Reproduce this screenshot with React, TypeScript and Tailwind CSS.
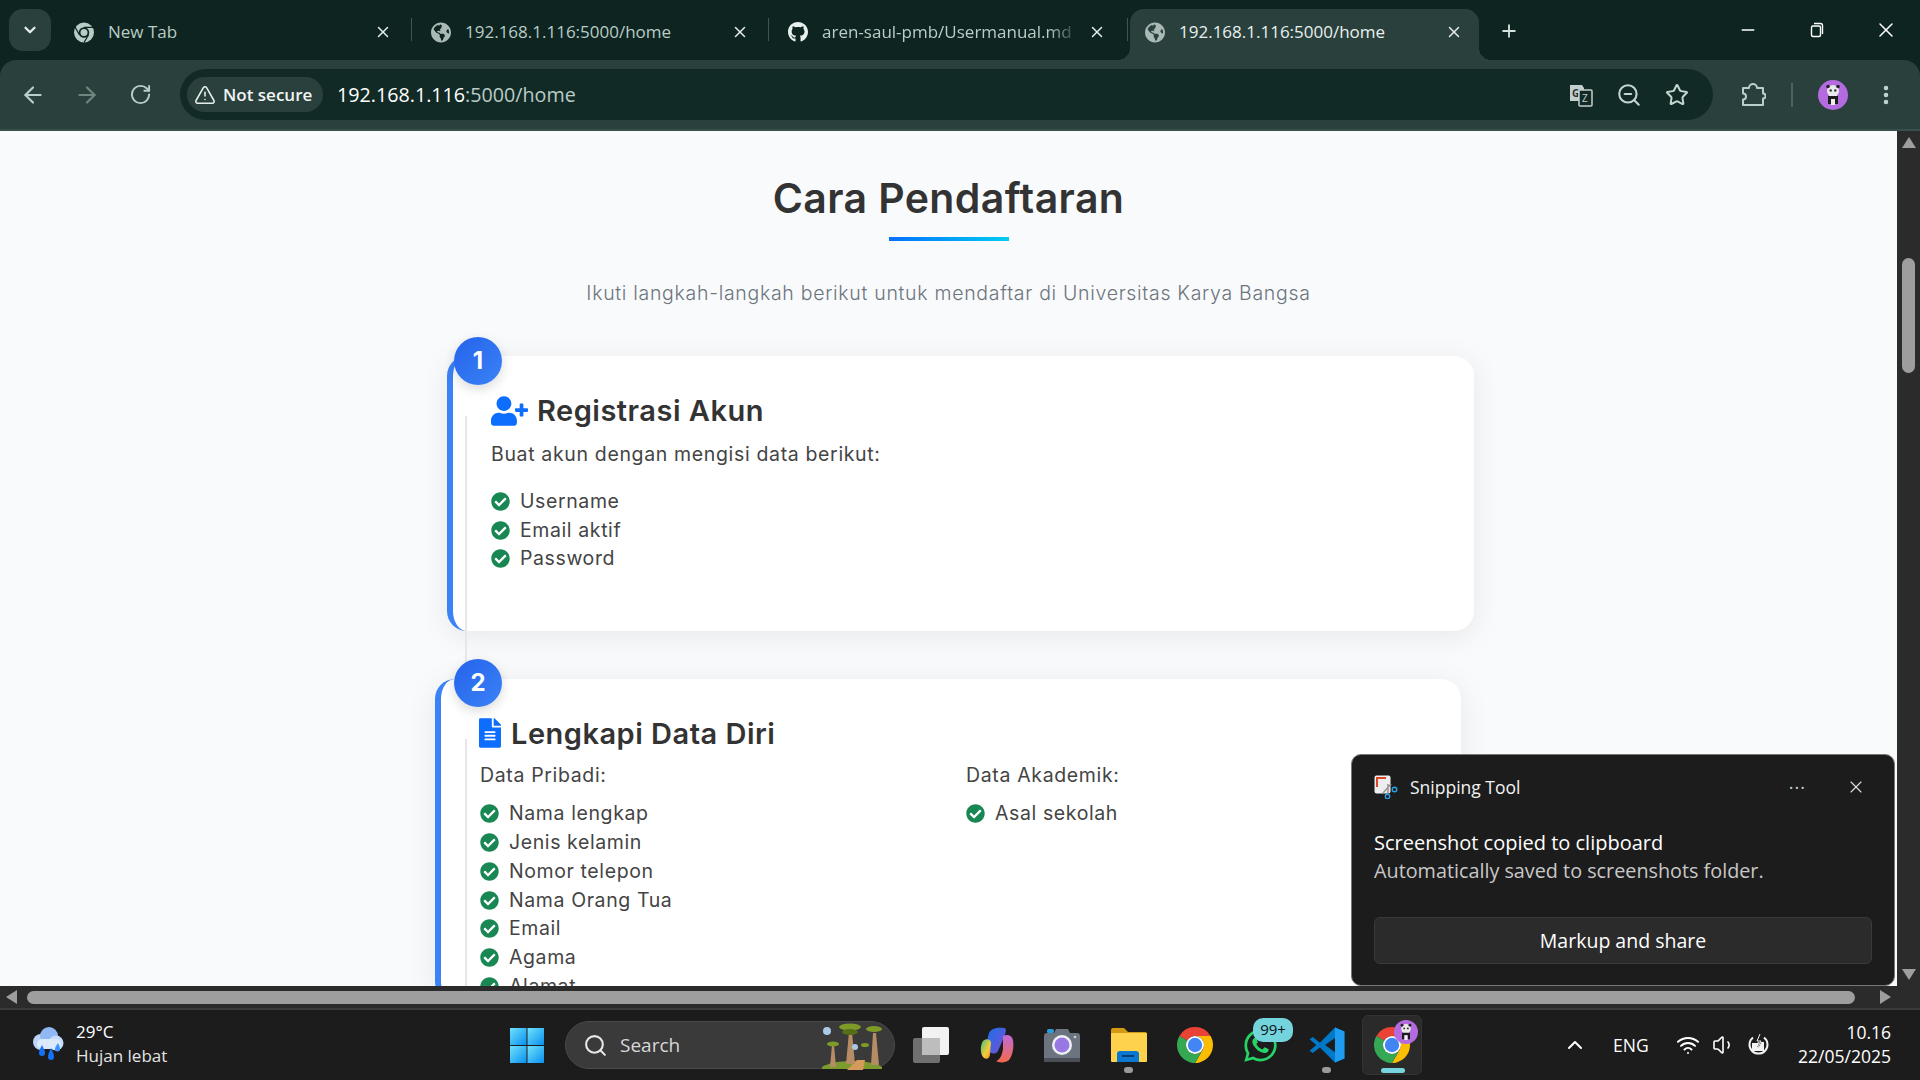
import {
  ArrowLeft,
  ArrowRight,
  ChevronDown,
  ChevronUp,
  EllipsisVertical,
  Minus,
  Plus,
  RotateCw,
  Search,
  Star,
  TriangleAlert,
  Volume1,
  Wifi,
  X,
  ZoomOut,
} from "lucide-react";
import type { ReactNode } from "react";
import { FaCheckCircle, FaFileAlt, FaGithub, FaGlobeAmericas, FaUserPlus, FaWhatsapp } from "react-icons/fa";

const uiFont = "font-['Open_Sans','Noto_Sans',sans-serif]";
const headFont = "font-['Inter','Noto_Sans',sans-serif]";

function ChromeLogo({ className }: { className?: string }) {
  return (
    <svg viewBox="4 4 40 40" className={className}>
      <path fill="#ea4335" d="M24 4A20 20 0 0 1 41.32 14H24A10 10 0 0 0 15.34 19L6.68 14A20 20 0 0 1 24 4Z" />
      <path fill="#fbbc04" d="M41.32 14A20 20 0 0 1 24 44L32.66 29A10 10 0 0 0 24 14Z" />
      <path fill="#34a853" d="M6.68 14A20 20 0 0 0 24 44L32.66 29A10 10 0 0 1 15.34 19Z" />
      <circle cx="24" cy="24" r="10" fill="#fff" />
      <circle cx="24" cy="24" r="8" fill="#4285f4" />
    </svg>
  );
}

function MonoChrome() {
  return (
    <svg viewBox="4 4 40 40" className="h-[21px] w-[21px]">
      <circle cx="24" cy="24" r="20" fill="#b5cdc7" />
      <circle cx="24" cy="24" r="10.5" fill="#0d2420" />
      <circle cx="24" cy="24" r="7" fill="#b5cdc7" />
      <path d="M24 13.5H42M15 29L6 13M33 29L24 44" stroke="#0d2420" strokeWidth="2.5" fill="none" />
    </svg>
  );
}

function Panda({ className }: { className?: string }) {
  return (
    <svg viewBox="0 0 30 30" className={className}>
      <circle cx="15" cy="15" r="15" fill="#b56be0" />
      <circle cx="15" cy="11" r="6" fill="#e9e9e9" />
      <circle cx="10" cy="6.5" r="1.8" fill="#222" />
      <circle cx="20" cy="6.5" r="1.8" fill="#222" />
      <circle cx="12.7" cy="10.5" r="1.2" fill="#333" />
      <circle cx="17.3" cy="10.5" r="1.2" fill="#333" />
      <path d="M10 16h10v8h-3v-5h-4v5h-3z" fill="#1d1d1d" />
      <rect x="13" y="19" width="4" height="6" fill="#eee" />
    </svg>
  );
}

function Tab({
  icon,
  title,
  active,
  width,
  fade,
  closeMargin,
}: {
  icon: ReactNode;
  title: string;
  active?: boolean;
  width: string;
  fade?: boolean;
  closeMargin: string;
}) {
  return (
    <div
      className={`relative flex h-[51px] items-center pb-[5px] ${width} ${active ? "rounded-t-[14px] bg-[#2a403c] pl-[15px]" : "pl-[17px]"}`}
    >
      {active && (
        <>
          <span className="absolute bottom-0 left-[-12px] h-3 w-3 bg-[radial-gradient(circle_at_0_0,transparent_12px,#2a403c_12px)]" />
          <span className="absolute bottom-0 right-[-12px] h-3 w-3 bg-[radial-gradient(circle_at_100%_0,transparent_12px,#2a403c_12px)]" />
        </>
      )}
      <span className="flex w-5 shrink-0 items-center justify-center">{icon}</span>
      <span
        className={`ml-[14px] min-w-0 flex-1 overflow-hidden whitespace-nowrap text-[17px] ${active ? "text-[#e8f0ee]" : "text-[#b9ccc7]"} ${fade ? "[mask-image:linear-gradient(to_right,black_88%,transparent)]" : ""}`}
      >
        {title}
      </span>
      <X className={`ml-2 h-[18px] w-[18px] shrink-0 text-[#e3ecea] ${closeMargin}`} strokeWidth={2} />
      {!active && <span className="absolute right-[2px] top-[9px] h-[23px] w-px bg-[#3f5551]" />}
    </div>
  );
}

function TabStrip() {
  const globe = <FaGlobeAmericas className="h-[21px] w-[21px] text-[#a9bab6]" />;
  return (
    <div className={`flex h-[60px] shrink-0 items-end bg-[#0d2420] ${uiFont}`}>
      <div className="mb-[9px] ml-[9px] mr-[6px] flex h-[42px] w-[42px] items-center justify-center rounded-[14px] bg-[#2a403c]">
        <ChevronDown className="h-[18px] w-[18px] text-[#e6efec]" strokeWidth={3} />
      </div>
      <Tab icon={<MonoChrome />} title="New Tab" width="w-[357px]" closeMargin="mr-[22px]" />
      <Tab icon={globe} title="192.168.1.116:5000/home" width="w-[357px]" closeMargin="mr-[22px]" />
      <Tab
        icon={<FaGithub className="h-6 w-6 text-[#e8f0ee]" />}
        title="aren-saul-pmb/Usermanual.md"
        width="w-[359px]"
        closeMargin="mr-[24px]"
        fade
      />
      <Tab icon={globe} title="192.168.1.116:5000/home" width="w-[349px]" closeMargin="mr-[16px]" active />
      <div className="mb-[8px] ml-[20px] flex h-[42px] items-center">
        <Plus className="h-5 w-5 text-[#d6e2df]" strokeWidth={2.2} />
      </div>
      <div className="mb-[9px] ml-auto flex h-[42px] items-center text-white">
        <div className="flex w-[69px] justify-center">
          <Minus className="h-5 w-5" strokeWidth={1.6} />
        </div>
        <div className="flex w-[69px] justify-center">
          <svg viewBox="0 0 16 16" className="h-[16px] w-[16px]" fill="none" stroke="currentColor" strokeWidth="1.4">
            <rect x="2.5" y="4" width="9" height="10.5" rx="1.5" />
            <path d="M5 1.5h6.5a2 2 0 0 1 2 2V12" />
          </svg>
        </div>
        <div className="flex w-[69px] justify-center">
          <X className="h-6 w-6" strokeWidth={1.5} />
        </div>
      </div>
    </div>
  );
}

function Toolbar() {
  return (
    <div className={`flex h-[71px] shrink-0 items-center border-b-2 border-[#3a504c] bg-[#0d2420] ${uiFont}`}>
      <div className="flex h-full w-full items-center rounded-t-[16px] bg-[#2a403c]">
        <ArrowLeft className="ml-[20px] h-[26px] w-[26px] text-[#b9d0ca]" strokeWidth={2} />
        <ArrowRight className="ml-[28px] h-[26px] w-[26px] text-[#6f8580]" strokeWidth={2} />
        <RotateCw className="ml-[29px] h-[23px] w-[23px] text-[#b9d0ca]" strokeWidth={2} />
        <div className="ml-[28px] flex h-[51px] w-[1533px] items-center rounded-full bg-[#122a25] pl-[7px]">
          <div className="flex h-[35px] w-[136px] items-center rounded-full bg-[#2a403c] pl-[7px]">
            <TriangleAlert className="h-[22px] w-[22px] text-[#e6efec]" strokeWidth={1.7} />
            <span className="ml-[7px] whitespace-nowrap text-[17px] font-semibold text-[#f0f5f4]">Not secure</span>
          </div>
          <span className="ml-[14px] whitespace-nowrap text-[19.700px] text-white">
            192.168.1.116<span className="text-[#b9ccc7]">:5000/home</span>
          </span>
          <div className="ml-auto flex items-center text-[#c3d6d1]">
            <svg viewBox="0 0 26 26" className="mr-[1px] h-[26px] w-[26px]">
              <path d="M2 3h12l2 3v13H2z" fill="#c3cfcc" />
              <text x="4" y="15" fontSize="10" fontWeight="700" fill="#26322f" fontFamily="Open Sans">G</text>
              <rect x="11" y="8" width="13" height="16" rx="1" fill="#122a25" stroke="#c3cfcc" strokeWidth="1.5" />
              <text x="14" y="20" fontSize="10" fill="#c3cfcc" fontFamily="Open Sans">Z</text>
            </svg>
            <ZoomOut className="ml-[21px] h-[26px] w-[26px]" strokeWidth={1.9} />
            <Star className="ml-[23px] h-[24px] w-[24px]" strokeWidth={2} />
            <div className="w-[24px]" />
          </div>
        </div>
        <svg viewBox="0 0 26 26" className="ml-[27px] h-[26px] w-[26px]" fill="none" stroke="#b9d0ca" strokeWidth="2">
          <path d="M3 6h6a4 4 0 0 1 8 0h6v5.5a2.5 2.5 0 0 1 0 5V23H3v-5.500a3 3 0 0 0 0-6Z" strokeLinejoin="round" />
        </svg>
        <span className="ml-[25px] h-[24px] w-[2px] bg-[#4b625d]" />
        <Panda className="ml-[25px] h-[30px] w-[30px]" />
        <EllipsisVertical className="ml-[26px] h-[24px] w-[24px] text-[#c3d6d1]" strokeWidth={2.5} />
      </div>
    </div>
  );
}

function CheckItem({ label }: { label: string }) {
  return (
    <li className="flex h-[28.800px] items-center">
      <FaCheckCircle className="h-[19px] w-[19px] shrink-0 text-[#198754]" />
      <span className="ml-[10px] whitespace-nowrap text-[19.500px] tracking-[0.6px] text-[#444]">{label}</span>
    </li>
  );
}

function RegistrationPage() {
  const pribadi = ["Nama lengkap", "Jenis kelamin", "Nomor telepon", "Nama Orang Tua", "Email", "Agama", "Alamat"];
  const bodyText = "text-[19.500px] leading-[28px] tracking-[0.65px] text-[#444]";
  const cardTitle = `flex h-[42px] items-center text-[29px] font-semibold tracking-[0.5px] text-[#333] ${headFont}`;
  return (
    <main className="h-full min-w-0 flex-1 overflow-hidden bg-[#f9fafc] pt-[37px] font-['Inter',sans-serif]">
      <h1 className={`text-center text-[41px] font-semibold leading-[60px] tracking-[0.4px] text-[#333] ${headFont}`}>
        Cara Pendaftaran
      </h1>
      <div className="mx-auto mt-[9px] h-1 w-[120px] bg-gradient-to-r from-[#0d6efd] to-[#0dcaf0]" />
      <p className="mt-[38px] whitespace-nowrap text-center text-[19.500px] font-light leading-7 tracking-[0.7px] text-[#6c757d]">
        Ikuti langkah-langkah berikut untuk mendaftar di Universitas Karya Bangsa
      </p>

      <div className="relative ml-[447px] mt-[49px] w-[1027px]">
        <div className="rounded-[20px] border-l-[6px] border-[#3b82f6] bg-white pb-[58px] pl-[38px] pt-[34px] shadow-[0_5px_30px_rgba(0,0,0,0.08)]">
          <h2 className={cardTitle}>
            <FaUserPlus className="h-[30px] w-[37px] text-[#0d6efd]" />
            <span className="ml-[9px]">Registrasi Akun</span>
          </h2>
          <p className={`mt-[8px] ${bodyText}`}>Buat akun dengan mengisi data berikut:</p>
          <ul className="mt-[19px]">
            <CheckItem label="Username" />
            <CheckItem label="Email aktif" />
            <CheckItem label="Password" />
          </ul>
        </div>
        <span className="absolute left-[18px] top-[60px] h-[270px] w-[2px] bg-[#e5e7eb]" />
        <StepBadge n={1} top="top-[-19px]" />
      </div>

      <div className="relative ml-[447px] mt-[48px] w-[1027px]">
        <div className="-ml-[12px] mr-[13px] rounded-[20px] border-l-[6px] border-[#3b82f6] bg-white pl-[38px] pt-[33px] shadow-[0_5px_30px_rgba(0,0,0,0.08)]">
          <h2 className={cardTitle}>
            <FaFileAlt className="h-[30px] w-[22px] text-[#0d6efd]" />
            <span className="ml-[10px]">Lengkapi Data Diri</span>
          </h2>
          <div className="mt-[7px] grid grid-cols-[486px_1fr] pl-[1px]">
            <div>
              <p className={bodyText}>Data Pribadi:</p>
              <ul className="mt-[10px]">
                {pribadi.map((item) => (
                  <CheckItem key={item} label={item} />
                ))}
              </ul>
            </div>
            <div>
              <p className={bodyText}>Data Akademik:</p>
              <ul className="mt-[10px]">
                <CheckItem label="Asal sekolah" />
              </ul>
            </div>
          </div>
        </div>
        <span className="absolute left-[18px] top-[60px] h-[270px] w-[2px] bg-[#e5e7eb]" />
        <StepBadge n={2} top="top-[-20px]" />
      </div>
    </main>
  );
}

function StepBadge({ n, top }: { n: number; top: string }) {
  return (
    <div
      className={`absolute left-[7px] ${top} flex h-12 w-12 items-center justify-center rounded-full bg-gradient-to-br from-[#2563eb] to-[#3b82f6] text-[24px] font-bold text-white shadow-[0_4px_12px_rgba(0,0,0,0.15)] ${headFont}`}
    >
      {n}
    </div>
  );
}

function VerticalScrollbar() {
  return (
    <div className="relative h-full w-[23px] shrink-0 bg-[#2b2b2b]">
      <span className="absolute left-[5px] top-[6px] h-0 w-0 border-x-[7px] border-b-[11px] border-x-transparent border-b-[#9e9e9e]" />
      <div className="absolute left-[5px] top-[127px] h-[115px] w-[13px] rounded-full bg-[#9e9e9e]" />
      <span className="absolute bottom-[6px] left-[5px] h-0 w-0 border-x-[7px] border-t-[11px] border-x-transparent border-t-[#9e9e9e]" />
    </div>
  );
}

function HorizontalScrollbar() {
  return (
    <div className="flex h-[24px] shrink-0 items-center border-b-[2px] border-[#3a3a3a] bg-[#2b2b2b] pl-[6px]">
      <span className="h-0 w-0 border-y-[7px] border-r-[11px] border-y-transparent border-r-[#9e9e9e]" />
      <div className="ml-[10px] h-[13px] w-[1828px] rounded-full bg-[#9e9e9e]" />
      <span className="ml-[25px] h-0 w-0 border-y-[7px] border-l-[11px] border-y-transparent border-l-[#9e9e9e]" />
    </div>
  );
}

function SnippingIcon() {
  return (
    <svg viewBox="0 0 24 24" className="h-6 w-6">
      <rect x="0.5" y="0.500" width="16" height="18" rx="2" fill="#eee" />
      <path d="M2 2h10v2H2zM2 2h2v10H2z" fill="#d9472b" strokeDasharray="2 1" />
      <path d="M9 18L17 9M14 9v9" stroke="#999" strokeWidth="1.6" />
      <circle cx="20.500" cy="14.500" r="2.300" fill="none" stroke="#2aa0e6" strokeWidth="1.400" />
      <circle cx="13.500" cy="21.500" r="2.200" fill="none" stroke="#2aa0e6" strokeWidth="1.400" />
    </svg>
  );
}

function SnipToast() {
  return (
    <div className={`absolute bottom-[94px] right-[25px] h-[232px] w-[544px] rounded-[10px] border border-[#777] bg-[#1c1c1c] pl-[22px] pr-[22px] ${uiFont}`}>
      <div className="flex h-[64px] items-center">
        <SnippingIcon />
        <span className="ml-[12px] text-[17.500px] text-[#f2f2f2]">Snipping Tool</span>
        <span className="ml-auto text-[18px] tracking-[1px] text-[#cfcfcf]">···</span>
        <X className="ml-[40px] mr-[6px] h-[20px] w-[20px] text-[#dcdcdc]" strokeWidth={1.4} />
      </div>
      <p className="mt-[10px] text-[20px] leading-[28px] text-white">Screenshot copied to clipboard</p>
      <p className="text-[19.800px] leading-[28px] text-[#c8c8c8]">Automatically saved to screenshots folder.</p>
      <div className="mt-[32px] flex h-[47px] items-center justify-center rounded-[6px] border border-[#3a3a3a] bg-[#2b2b2b] text-[19.500px] text-white">
        Markup and share
      </div>
    </div>
  );
}

function WeatherIcon() {
  return (
    <svg viewBox="0 0 38 38" className="h-[38px] w-[38px]">
      <circle cx="13" cy="16" r="8" fill="#bcd4fa" />
      <circle cx="21" cy="10" r="9" fill="#8fb8f5" />
      <circle cx="28" cy="17" r="7.500" fill="#c6dbfb" />
      <rect x="9" y="13" width="24" height="10" rx="5" fill="#dce9fd" />
      <path d="M14 19c2 4 3 6 3 8a3 3 0 0 1-6 0c0-2 1-4 3-8Z" fill="#1472f5" />
      <path d="M23 22c2 4 3 6 3 9a3 3 0 0 1-6 0c0-3 1-5 3-9Z" fill="#1472f5" />
      <path d="M30 17c1.500 3 2 4 2 6a2.500 2.500 0 0 1-5 0c0-2 1-3 3-6Z" fill="#3c94ff" />
    </svg>
  );
}

function WindowsLogo() {
  return (
    <svg viewBox="0 0 34 35" className="h-[35px] w-[34px]">
      <defs>
        <linearGradient id="win" x1="0" y1="0" x2="1" y2="1">
          <stop offset="0" stopColor="#6fe3fb" />
          <stop offset="1" stopColor="#0a8ff0" />
        </linearGradient>
      </defs>
      <rect x="0" y="0" width="16.500" height="17" fill="url(#win)" />
      <rect x="17.500" y="0" width="16.500" height="17" fill="url(#win)" />
      <rect x="0" y="18" width="16.500" height="17" fill="url(#win)" />
      <rect x="17.500" y="18" width="16.500" height="17" fill="url(#win)" />
    </svg>
  );
}

function BaobabArt() {
  return (
    <svg viewBox="0 0 66 56" className="h-[56px] w-[66px]">
      <path d="M3 50c12-8 48-8 60 0v2H3z" fill="#7d9a2e" />
      <path d="M28 53l10-10h8l-2 10z" fill="#d59b5b" />
      <path d="M11 50l2-22h2l2 22zM27 47l3-32h3l3 32zM52 48l2-32h3l3 32z" fill="#b58c64" />
      <ellipse cx="31" cy="10" rx="11" ry="3.500" fill="#7f9b27" />
      <ellipse cx="31" cy="15" rx="8" ry="3" fill="#566f17" />
      <ellipse cx="55" cy="12" rx="8" ry="3" fill="#7f9b27" />
      <ellipse cx="14" cy="27" rx="6" ry="2.500" fill="#7f9b27" />
      <ellipse cx="46" cy="28" rx="4" ry="2" fill="#7f9b27" />
      <circle cx="8" cy="14" r="4" fill="#a9c9e6" />
      <circle cx="36" cy="30" r="3" fill="#a9c9e6" />
    </svg>
  );
}

function TaskView() {
  return (
    <svg viewBox="0 0 36 36" className="h-[36px] w-[36px]">
      <rect x="0" y="11" width="27" height="25" rx="2" fill="#707070" />
      <rect x="9" y="0" width="27" height="28" rx="2" fill="#f2f2f2" />
      <rect x="9" y="11" width="18" height="17" fill="#bdbdbd" />
    </svg>
  );
}

function CopilotIcon() {
  return (
    <svg viewBox="0 0 34 36" className="h-[36px] w-[34px]">
      <defs>
        <linearGradient id="cpa" x1="0" y1="0" x2="1" y2="1">
          <stop offset="0" stopColor="#1c6fe8" />
          <stop offset="1" stopColor="#7a4fd6" />
        </linearGradient>
        <linearGradient id="cpb" x1="0" y1="0" x2="1" y2="1">
          <stop offset="0" stopColor="#3cc37a" />
          <stop offset="0.600" stopColor="#f6cb3a" />
          <stop offset="1" stopColor="#f08a2a" />
        </linearGradient>
        <linearGradient id="cpc" x1="0" y1="0" x2="0" y2="1">
          <stop offset="0" stopColor="#c06bd8" />
          <stop offset="1" stopColor="#f4694a" />
        </linearGradient>
      </defs>
      <path d="M9 6c2-5 9-6 15-5 3 .500 2 5 0 9l-6 14c-2 4-9 3-10-1-1-6-1-12 1-17Z" fill="url(#cpa)" />
      <path d="M3 14c3-3 7-2 8 1l-1 12c0 4-3 6-6 4C0 28 0 18 3 14Z" fill="url(#cpb)" />
      <path d="M23 9c4-2 9-1 10 4 1 7 0 15-4 20-3 3-10 3-13 1 4-1 6-6 7-12Z" fill="url(#cpc)" />
    </svg>
  );
}

function CameraIcon() {
  return (
    <svg viewBox="0 0 36 34" className="h-[34px] w-[36px]">
      <rect x="3" y="1" width="7" height="4" rx="1.500" fill="#2a9bd8" />
      <path d="M0 8a3 3 0 0 1 3-3h7l2-4h12l2 4h7a3 3 0 0 1 3 3v26H0z" fill="#6c7480" />
      <rect x="0" y="30" width="36" height="4" fill="#4b5058" />
      <circle cx="18" cy="17" r="10" fill="#eef1f6" />
      <circle cx="18" cy="17" r="7.500" fill="#9a78e4" />
      <circle cx="31" cy="9" r="1.300" fill="#c8ccd2" />
    </svg>
  );
}

function FolderIcon() {
  return (
    <svg viewBox="0 0 36 34" className="h-[34px] w-[36px]">
      <path d="M0 2a2 2 0 0 1 2-2h11l4 4h17a2 2 0 0 1 2 2v5H0z" fill="#d39b13" />
      <rect x="0" y="5" width="36" height="29" rx="1" fill="#ffd24d" />
      <path d="M6 34v-8a3 3 0 0 1 3-3h16a3 3 0 0 1 3 3v8z" fill="#0a78d0" />
      <rect x="11" y="27" width="12" height="2" fill="#063f73" />
    </svg>
  );
}

function VsCodeIcon() {
  return (
    <svg viewBox="0 0 24 24" className="h-[38px] w-[38px]">
      <path d="M17 1 7.500 10.500 3 7 1 8.300 5.200 12 1 15.700 3 17l4.500-3.500L17 23l6-2.500v-17z" fill="#0078c8" />
      <path d="M17 1l6 2.500v17L17 23z" fill="#1f9cf0" />
      <path d="M17 7.500 10.800 12l6.200 4.500z" fill="#1c1c1c" />
    </svg>
  );
}

function BatteryIcon() {
  return (
    <svg viewBox="0 0 24 24" className="h-[24px] w-[24px]" fill="none" stroke="#f2f2f2" strokeWidth="2">
      <path d="M7 4.500a9 9 0 1 0 11 0" />
      <path d="M6 10h5l2-1h5v9H6z" fill="#f2f2f2" stroke="none" />
      <path d="M14 1l-3 7h4l-3 6" strokeWidth="1.600" stroke="#1c1c1c" />
      <path d="M14 1l-3 7h4l-3 6" strokeWidth="1" />
    </svg>
  );
}

function Taskbar() {
  return (
    <footer className={`relative flex h-[70px] shrink-0 items-center bg-[#1c1c1c] text-white ${uiFont}`}>
      <div className="ml-[28px] w-[38px]">
        <WeatherIcon />
      </div>
      <div className="ml-[10px] w-[434px] pb-[2px] text-[17px] leading-[24px]">
        <p>29°C</p>
        <p className="text-[#e4e4e4]">Hujan lebat</p>
      </div>
      <WindowsLogo />
      <div className="ml-[21px] flex h-[48px] w-[330px] items-center rounded-full border border-[#4a4a4a] bg-[#3a3a3a] pl-[17px] pr-[9px]">
        <Search className="h-[25px] w-[25px] text-[#e8e8e8]" strokeWidth={2} />
        <span className="ml-[12px] text-[19px] text-[#d8d8d8]">Search</span>
        <div className="ml-auto">
          <BaobabArt />
        </div>
      </div>
      <div className="ml-[18px]">
        <TaskView />
      </div>
      <div className="ml-[31px]">
        <CopilotIcon />
      </div>
      <div className="ml-[30px]">
        <CameraIcon />
      </div>
      <div className="relative ml-[31px]">
        <FolderIcon />
        <span className="absolute bottom-[-11px] left-[13px] h-[6px] w-[9px] rounded-full bg-[#9a9a9a]" />
      </div>
      <ChromeLogo className="ml-[30px] h-[36px] w-[36px]" />
      <div className="relative ml-[29px]">
        <FaWhatsapp className="h-[37px] w-[37px] text-[#25d366]" />
        <span className="absolute left-[11px] top-[-9px] flex h-[24px] w-[40px] items-center justify-center rounded-[10px] bg-[#74d4de] text-[15px] text-[#111]">
          99+
        </span>
      </div>
      <div className="relative ml-[29px]">
        <VsCodeIcon />
        <span className="absolute bottom-[-9px] left-[14px] h-[6px] w-[9px] rounded-full bg-[#9a9a9a]" />
      </div>
      <div className="relative ml-[16px] flex h-[60px] w-[60px] items-center justify-center rounded-[6px] border border-[#333] bg-[#2a2a2a]">
        <ChromeLogo className="h-[36px] w-[36px]" />
        <Panda className="absolute right-[3px] top-[4px] h-[24px] w-[24px]" />
        <span className="absolute bottom-[1px] left-[18px] h-[5px] w-[24px] rounded-full bg-[#76d5df]" />
      </div>
      <ChevronUp className="ml-[141px] h-[24px] w-[24px]" strokeWidth={2} />
      <span className="ml-[26px] w-[38px] whitespace-nowrap text-[17.500px]">ENG</span>
      <Wifi className="ml-[25px] h-[24px] w-[24px]" strokeWidth={2} />
      <Volume1 className="ml-[12px] h-[24px] w-[24px]" strokeWidth={1.6} />
      <div className="ml-[10px]">
        <BatteryIcon />
      </div>
      <div className="ml-auto mr-[29px] pb-[2px] text-right text-[17.500px] leading-[24px]">
        <p>10.16</p>
        <p>22/05/2025</p>
      </div>
    </footer>
  );
}

export default function App() {
  return (
    <div className="relative flex h-screen w-screen flex-col overflow-hidden bg-[#1c1c1c]">
      <TabStrip />
      <Toolbar />
      <div className="flex min-h-0 flex-1">
        <RegistrationPage />
        <VerticalScrollbar />
      </div>
      <HorizontalScrollbar />
      <Taskbar />
      <SnipToast />
    </div>
  );
}
